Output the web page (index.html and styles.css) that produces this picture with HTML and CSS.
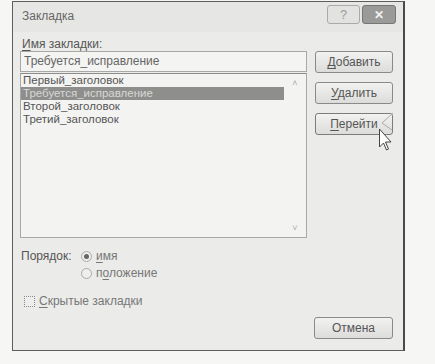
FILE: index.html
```html
<!DOCTYPE html>
<html lang="ru">
<head>
    <meta charset="UTF-8">
    <title>Закладка</title>
    <link rel="stylesheet" href="styles.css">
</head>
<body>
    <div class="dialog">
        <div class="titlebar">
            <span class="title">Закладка</span>
            <div class="controls">
                <span class="ctl help">?</span>
                <span class="ctl close">✕</span>
            </div>
        </div>

        <div class="content">
            <label class="field-label"><u>И</u>мя закладки:</label>
            <div class="main">
                <div class="left">
                    <div class="name-input">Требуется_исправление</div>
                    <div class="list">
                        <div class="items">
                            <div class="item">Первый_заголовок</div>
                            <div class="item selected">Требуется_исправление</div>
                            <div class="item">Второй_заголовок</div>
                            <div class="item">Третий_заголовок</div>
                        </div>
                        <div class="scroll">
                            <span class="arrow">˄</span>
                            <span class="arrow">˅</span>
                        </div>
                    </div>
                </div>
                <div class="buttons">
                    <button class="btn"><u>Д</u>обавить</button>
                    <button class="btn"><u>У</u>далить</button>
                    <button class="btn focus"><u>П</u>ерейти</button>
                </div>
            </div>

            <div class="order">
                <span class="order-label">Порядок:</span>
                <div class="radios">
                    <div class="radio-row"><span class="radio on"></span><span><u>и</u>мя</span></div>
                    <div class="radio-row"><span class="radio"></span><span>п<u>о</u>ложение</span></div>
                </div>
            </div>

            <div class="check-row">
                <span class="checkbox"></span><span><u>С</u>крытые закладки</span>
            </div>

            <div class="footer">
                <button class="btn">Отмена</button>
            </div>
        </div>

        <!-- указатель мыши над кнопкой "Перейти" -->
        <svg class="cursor" width="16" height="40" viewBox="0 0 16 40">
            <path d="M15 1 L4 11 L14 18" fill="none" stroke="#aaa" stroke-width="1"/>
            <path d="M1.5 17 L1.5 35 L5.5 31 L8.5 38 L10.5 37 L7.5 30 L13 30 Z" fill="#fff" stroke="#444" stroke-width="1"/>
        </svg>
    </div>
</body>
</html>
```

FILE: styles.css
```css
body {
    margin: 0;
    background: #f6f6f4;
    font-family: "Liberation Sans", Arial, sans-serif;
    font-size: 12px;
    color: #555;
}
u {
    text-decoration-thickness: 1px;
    text-underline-offset: 2px;
}
.dialog {
    position: relative;
    margin: 1px 0 0 12px;
    width: 393px;
    height: 350px;
    border: 1px solid #5e5e5e;
    border-right: 2px solid #4a4a4a;
    background: #ebebe9;
    box-sizing: border-box;
}
.titlebar {
    height: 30px;
    display: flex;
    justify-content: space-between;
    align-items: flex-start;
    background: #e6e6e4;
}
.title {
    margin: 7px 0 0 9px;
    color: #666;
}
.controls {
    display: flex;
    gap: 2px;
    margin: 3px 7px 0 0;
}
.ctl {
    width: 31px;
    height: 17px;
    border: 1px solid #aaa;
    border-radius: 3px;
    display: flex;
    align-items: center;
    justify-content: center;
    color: #999;
    background: #e2e2e0;
}
.close {
    width: 32px;
    background: #9a9a98;
    border-color: #777;
    color: #f2f2f2;
    font-weight: bold;
}
.content {
    padding: 5px 10px 0 7px;
}
.field-label {
    display: block;
    margin-left: 2px;
    height: 14px;
    line-height: 14px;
}
.main {
    display: flex;
    justify-content: space-between;
}
.left {
    width: 287px;
}
.name-input {
    height: 19px;
    line-height: 19px;
    border: 1px solid #a8a8a6;
    background: #f4f4f2;
    padding-left: 3px;
    color: #666;
}
.list {
    margin-top: 1px;
    height: 165px;
    border: 1px solid #a8a8a6;
    border-top-color: #8c8c8a;
    background: #f3f3f1;
    display: flex;
    box-sizing: border-box;
}
.items {
    flex: 1;
}
.item {
    height: 13px;
    line-height: 13px;
    padding-left: 2px;
    font-size: 11.5px;
    color: #555;
    white-space: nowrap;
}
.item.selected {
    background: #8e8e8c;
    color: #d8d8d6;
}
.scroll {
    width: 22px;
    display: flex;
    flex-direction: column;
    justify-content: space-between;
    align-items: center;
    padding: 4px 0;
    color: #aaa;
    font-size: 9px;
}
.buttons {
    display: flex;
    flex-direction: column;
    gap: 9px;
}
.btn {
    width: 78px;
    height: 22px;
    border: 1px solid #8a8a88;
    border-radius: 3px;
    background: linear-gradient(#f2f2f0, #dcdcda);
    font-family: inherit;
    font-size: 12px;
    color: #555;
    padding: 0;
}
.btn.focus {
    border-color: #7c7c7a;
}
.order {
    display: flex;
    margin-top: 11px;
    margin-left: 1px;
}
.order-label {
    width: 60px;
    line-height: 15px;
}
.radios {
    display: flex;
    flex-direction: column;
    gap: 3px;
}
.radio-row {
    display: flex;
    align-items: center;
    gap: 4px;
    height: 14px;
    color: #777;
}
.radio {
    width: 11px;
    height: 11px;
    border: 1px solid #aaa;
    border-radius: 50%;
    background: #eee;
    box-sizing: border-box;
    display: flex;
    align-items: center;
    justify-content: center;
}
.radio.on::after {
    content: "";
    width: 5px;
    height: 5px;
    border-radius: 50%;
    background: #666;
}
.check-row {
    display: flex;
    align-items: center;
    gap: 4px;
    margin: 14px 0 0 4px;
    height: 14px;
    color: #777;
}
.checkbox {
    width: 11px;
    height: 11px;
    border: 1px dotted #888;
    background: #eee;
    box-sizing: border-box;
}
.footer {
    display: flex;
    justify-content: flex-end;
    margin-top: 9px;
}
.footer .btn {
    width: 79px;
}
.cursor {
    position: absolute;
    left: 365px;
    top: 110px;
}
```
